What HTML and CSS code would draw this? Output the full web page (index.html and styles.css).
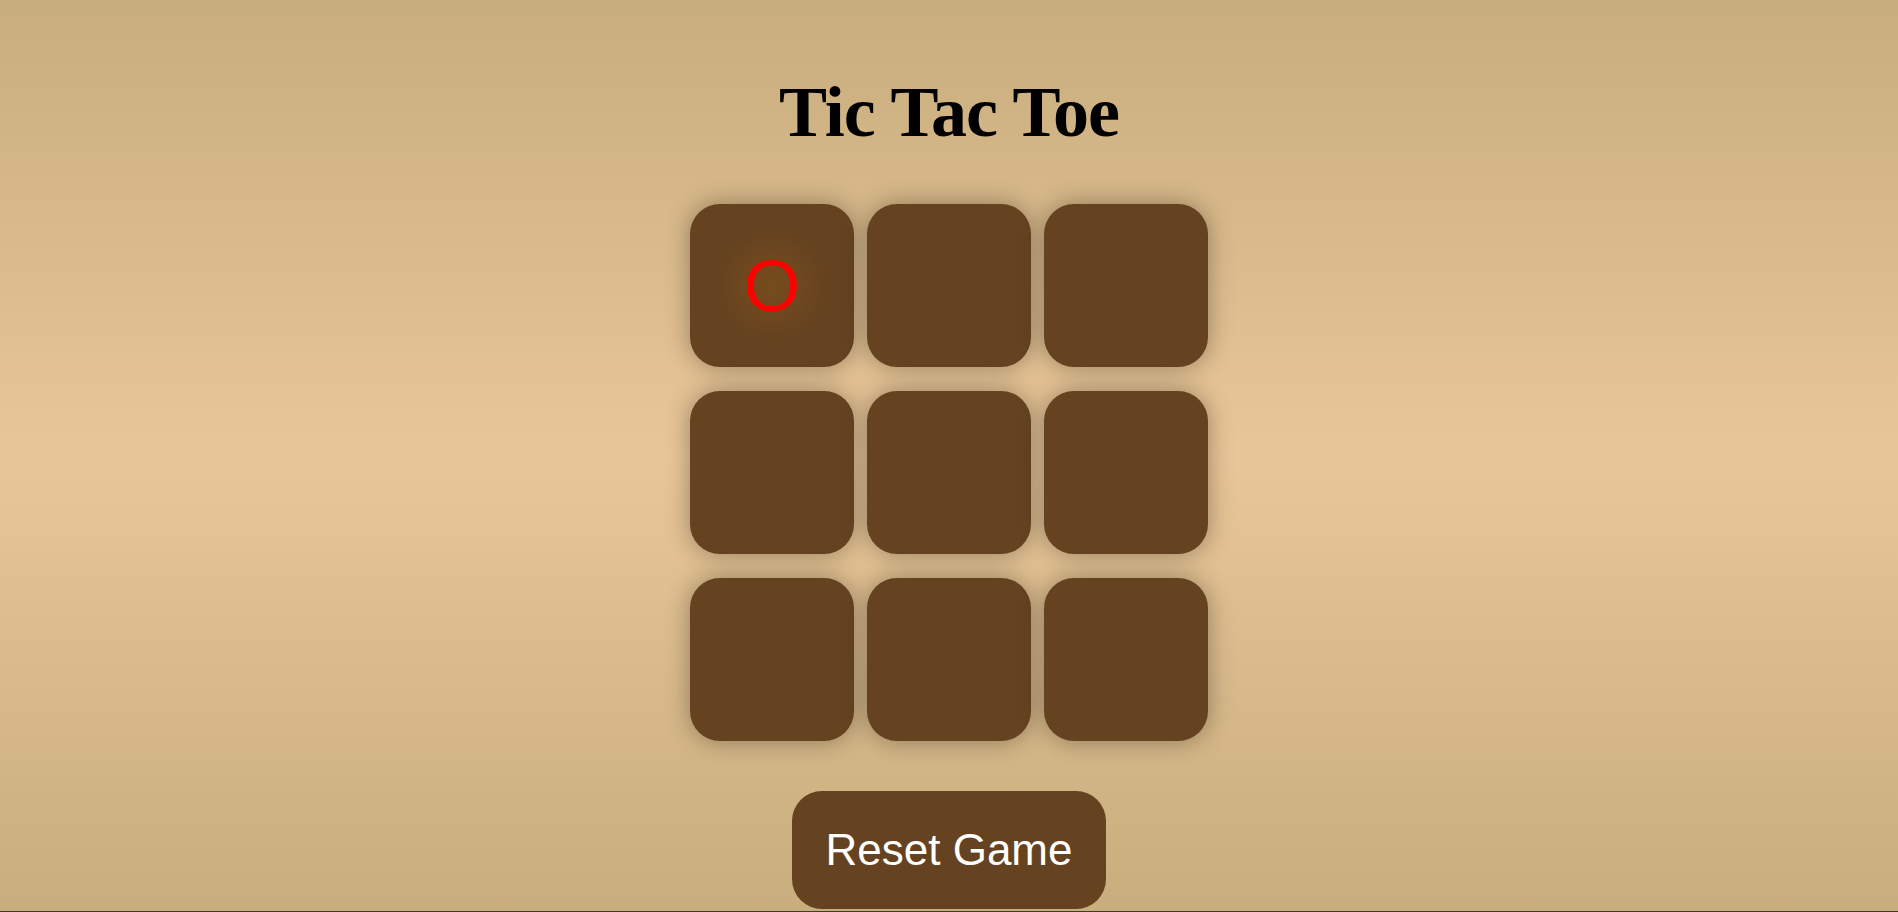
FILE: index.html
```html
<!DOCTYPE html>
<html lang="en">
<head>
<meta charset="utf-8">
<title>Tic Tac Toe</title>
<link rel="stylesheet" href="styles.css">
</head>
<body>
<main class="game">
  <h1 class="title">Tic Tac Toe</h1>
  <div class="board">
    <div class="cell cell-o">O</div>
    <div class="cell"></div>
    <div class="cell"></div>
    <div class="cell"></div>
    <div class="cell"></div>
    <div class="cell"></div>
    <div class="cell"></div>
    <div class="cell"></div>
    <div class="cell"></div>
  </div>
  <button class="reset">Reset Game</button>
</main>
</body>
</html>
```
FILE: styles.css
```css
html {
  height: 100%;
  background: #c9ae7e;
}

body {
  margin: 0;
  min-height: 100vh;
  overflow: hidden;
  background: linear-gradient(to bottom, #c8ad7d 0%, #e9c698 50%, #c8ad7d 100%);
  font-family: "Liberation Sans", Arial, sans-serif;
}

body::after {
  content: "";
  position: fixed;
  left: 0;
  right: 0;
  bottom: 0;
  height: 1px;
  background: #3c3a36;
}

.game {
  display: flex;
  flex-direction: column;
  align-items: center;
}

.title {
  margin: 71px 0 50px;
  font-family: "Liberation Serif", "Times New Roman", serif;
  font-weight: bold;
  font-size: 72px;
  line-height: 83px;
  letter-spacing: -1px;
  color: #000;
}

.board {
  display: grid;
  grid-template-columns: repeat(3, 164px);
  grid-template-rows: repeat(3, 163px);
  column-gap: 13px;
  row-gap: 24px;
}

.cell {
  background: #654321;
  border-radius: 30px;
  box-shadow: 0 0 24px rgba(0, 0, 0, 0.34);
  display: flex;
  align-items: center;
  justify-content: center;
  font-family: "Liberation Sans", Arial, sans-serif;
  font-size: 73px;
  line-height: 1;
  color: #ff0000;
}

.cell-o {
  text-shadow: 0 0 36px rgba(255, 150, 0, 0.5);
}

.reset {
  margin-top: 50px;
  padding: 34px 34px;
  border: none;
  border-radius: 30px;
  background: #654321;
  color: #ffffff;
  font-family: "Liberation Sans", Arial, sans-serif;
  font-size: 44px;
  line-height: normal;
}
```
